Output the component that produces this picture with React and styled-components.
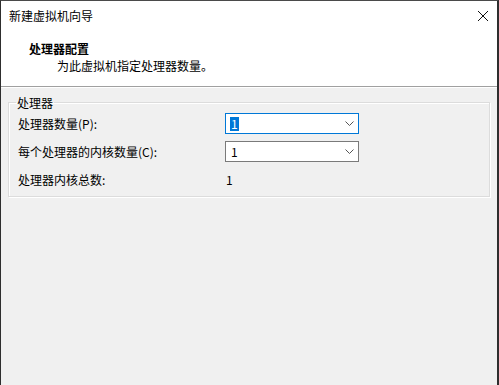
import React from "react";
import styled, { createGlobalStyle } from "styled-components";

const GlobalStyle = createGlobalStyle`
  html, body {
    margin: 0;
    padding: 0;
    background: #f0f0f0;
  }
  body {
    font-family: "Noto Sans CJK SC", "Microsoft YaHei", sans-serif;
    font-size: 12px;
    color: #000;
  }
`;

const Window = styled.div`
  width: 499px;
  height: 385px;
  box-sizing: border-box;
  display: flex;
  flex-direction: column;
  border-left: 1px solid #2e2e2e;
  border-right: 2px solid #2e2e2e;
  border-top: 1px solid #4a4a4a;
  background: #f0f0f0;
`;

const TitleBar = styled.div`
  height: 29px;
  display: flex;
  align-items: center;
  justify-content: space-between;
  background: #fff;
  padding: 0 9px 0 8px;
`;

const Title = styled.span`
  font-size: 12px;
  line-height: 16px;
`;

const CloseButton = styled.div`
  width: 10px;
  height: 29px;
  display: flex;
  align-items: center;
  justify-content: center;
`;

const Header = styled.div`
  height: 57px;
  background: #fff;
  border-bottom: 1px solid #a0a0a0;
  box-shadow: 0 1px 0 #fff;
  padding: 10px 0 0 28px;
  box-sizing: border-box;
`;

const HeaderTitle = styled.div`
  font-weight: bold;
  line-height: 16px;
  margin-top: 1px;
`;

const HeaderSub = styled.div`
  line-height: 16px;
  margin-top: 1px;
  padding-left: 28px;
`;

const Body = styled.div`
  flex: 1;
  padding: 8px 7px 0 7px;
`;

const Group = styled.fieldset`
  margin: 0;
  padding: 3px 9px 6px 9px;
  border: 1px solid #dcdcdc;
  box-shadow: inset 1px 1px 0 #fff, 1px 1px 0 #fff;
`;

const Legend = styled.legend`
  padding: 0 1px;
  margin-left: -2px;
  line-height: 15px;
`;

const Grid = styled.div`
  display: grid;
  grid-template-columns: 207px 134px;
  grid-auto-rows: 21px;
  row-gap: 7px;
  align-items: center;
`;

const Label = styled.span`
  line-height: 16px;
`;

const Combo = styled.div`
  height: 21px;
  box-sizing: border-box;
  border: 1px solid ${({ $focused }) => ($focused ? "#0078d7" : "#7a7a7a")};
  background: #fff;
  display: flex;
  align-items: center;
  justify-content: space-between;
  padding: 0 4px 0 4px;
`;

const Value = styled.span`
  line-height: 14px;
  padding: 0 1px;
  background: ${({ $selected }) => ($selected ? "#0078d7" : "transparent")};
  color: ${({ $selected }) => ($selected ? "#fff" : "#000")};
`;

const Plain = styled.span`
  padding-left: 1px;
`;

const Chevron = () => (
  <svg width="9" height="5" viewBox="0 0 9 5">
    <path d="M0.5 0.5 L4.5 4.5 L8.5 0.5" fill="none" stroke="#555" strokeWidth="1" />
  </svg>
);

const CloseIcon = () => (
  <svg width="10" height="10" viewBox="0 0 10 10">
    <path d="M0 0 L10 10 M10 0 L0 10" stroke="#111" strokeWidth="1" />
  </svg>
);

export default function App() {
  return (
    <>
      <GlobalStyle />
      <Window>
        <TitleBar>
          <Title>新建虚拟机向导</Title>
          <CloseButton>
            <CloseIcon />
          </CloseButton>
        </TitleBar>
        <Header>
          <HeaderTitle>处理器配置</HeaderTitle>
          <HeaderSub>为此虚拟机指定处理器数量。</HeaderSub>
        </Header>
        <Body>
          <Group>
            <Legend>处理器</Legend>
            <Grid>
              <Label>处理器数量(P):</Label>
              <Combo $focused>
                <Value $selected>1</Value>
                <Chevron />
              </Combo>
              <Label>每个处理器的内核数量(C):</Label>
              <Combo>
                <Value>1</Value>
                <Chevron />
              </Combo>
              <Label>处理器内核总数:</Label>
              <Plain>1</Plain>
            </Grid>
          </Group>
        </Body>
      </Window>
    </>
  );
}
